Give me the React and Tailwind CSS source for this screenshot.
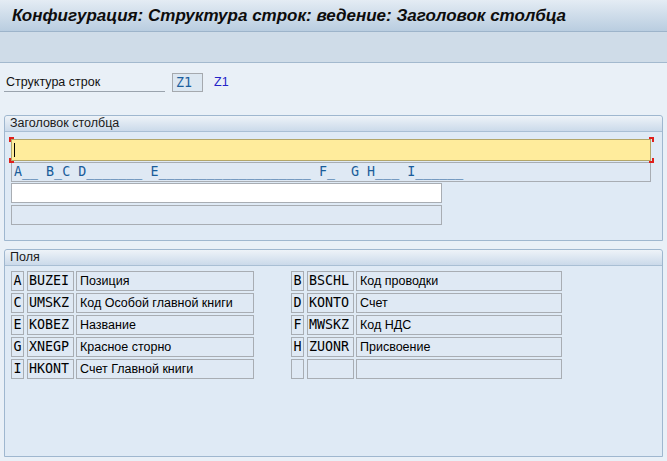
import React from "react";

const mono = { fontFamily: '"DejaVu Sans Mono", "Liberation Mono", monospace' };

function Cell({ w, children, monoFont, className = "" }) {
  return (
    <div
      className={`h-[20px] border border-[#a8adb3] bg-[#dfe9f4] flex items-center overflow-hidden whitespace-nowrap ${className}`}
      style={{ width: w, ...(monoFont ? mono : {}) }}
    >
      {children}
    </div>
  );
}

function FieldRow({ l, c, d, dw }) {
  return (
    <div className="flex items-center">
      <Cell w={13} monoFont className="justify-center text-[13.33px] text-black">{l}</Cell>
      <div className="w-[3px]" />
      <Cell w={47} monoFont className="pl-[1px] text-[13.33px] text-black">{c}</Cell>
      <div className="w-[2px]" />
      <Cell w={dw} className="pl-[3px] text-[12.5px] text-black">{d}</Cell>
    </div>
  );
}

function Group({ title, children, className = "" }) {
  return (
    <div className={`mx-[4px] border border-[#9fb7cf] rounded-t-[3px] bg-[#dfeaf5] ${className}`}>
      <div className="h-[16px] bg-gradient-to-b from-[#eef3f8] to-[#cbdaea] border-b border-[#a9bfd4] pl-[5px] flex items-center text-[12.5px] text-[#1a1a1a] rounded-t-[3px]">
        {title}
      </div>
      {children}
    </div>
  );
}

export default function App() {
  const rows = [
    ["A", "BUZEI", "Позиция", "B", "BSCHL", "Код проводки"],
    ["C", "UMSKZ", "Код Особой главной книги", "D", "KONTO", "Счет"],
    ["E", "KOBEZ", "Название", "F", "MWSKZ", "Код НДС"],
    ["G", "XNEGP", "Красное сторно", "H", "ZUONR", "Присвоение"],
    ["I", "HKONT", "Счет Главной книги", "", "", ""],
  ];
  return (
    <div
      className="w-[667px] h-[461px] bg-[#e9f0f7] overflow-hidden"
      style={{ fontFamily: '"Liberation Sans", Arial, sans-serif' }}
    >
      <div className="h-[32px] bg-gradient-to-b from-[#e4ecf4] to-[#b9cde0] border-b border-[#9db4ca] flex items-center pl-[12px]">
        <span className="text-[17px] font-bold italic text-[#0d0d0d]">
          Конфигурация: Структура строк: ведение: Заголовок столбца
        </span>
      </div>
      <div className="h-[31px] bg-[#cfdce8] border-b border-[#a3b9ce]" />

      <div className="h-[10px]" />
      <div className="flex items-center h-[19px]">
        <div className="ml-[4px] w-[161px] h-[19px] border-b border-[#9aa3ad] flex items-center pl-[2px] text-[12.5px] text-[#111]">
          Структура строк
        </div>
        <div className="ml-[7px] w-[31px] h-[19px] border border-[#a5a9ae] bg-[#dce7f1] flex items-center pl-[3px] text-[13.33px] text-[#1b5f9e]" style={mono}>
          Z1
        </div>
        <div className="ml-[11px] text-[12.5px] text-[#2323c8]">Z1</div>
      </div>

      <div className="h-[23px]" />
      <Group title="Заголовок столбца" className="h-[126px]">
        <div className="pl-[6px] pt-[7px] flex flex-col">
          <div className="relative w-[640px] h-[22px]">
            <div className="w-[640px] h-[22px] border border-[#b3a66a] bg-[#ffec9c] flex items-center pl-[2px]">
              <div className="w-[1px] h-[14px] bg-black" />
            </div>
            <div className="absolute left-[-2px] top-[-2px] w-[5px] h-[5px] border-l-2 border-t-2 border-[#e0201c]" />
            <div className="absolute left-[-2px] bottom-[-2px] w-[5px] h-[5px] border-l-2 border-b-2 border-[#e0201c]" />
            <div className="absolute right-[-3px] top-[-2px] w-[5px] h-[5px] border-r-2 border-t-2 border-[#e0201c]" />
            <div className="absolute right-[-3px] bottom-[-2px] w-[5px] h-[5px] border-r-2 border-b-2 border-[#e0201c]" />
          </div>
          <div className="mt-[1px] w-[640px] h-[20px] border border-[#a8adb3] bg-[#dfe9f4] flex items-center pl-[2px] text-[13.33px] text-[#1a5d9a] whitespace-pre" style={mono}>
            {"A__ B_C D_______ E___________________ F_  G H___ I______"}
          </div>
          <div className="mt-[1px] w-[431px] h-[20px] border border-[#a8adb3] bg-white" />
          <div className="mt-[2px] w-[431px] h-[20px] border border-[#a8adb3] bg-[#dfe9f4]" />
        </div>
      </Group>

      <div className="h-[8px]" />
      <Group title="Поля" className="h-[208px]">
        <div className="pl-[6px] pt-[5px] flex flex-col gap-[2px]">
          {rows.map((r, i) => (
            <div key={i} className="flex items-center">
              <FieldRow l={r[0]} c={r[1]} d={r[2]} dw={178} />
              <div className="w-[37px]" />
              <FieldRow l={r[3]} c={r[4]} d={r[5]} dw={206} />
            </div>
          ))}
        </div>
      </Group>
    </div>
  );
}
